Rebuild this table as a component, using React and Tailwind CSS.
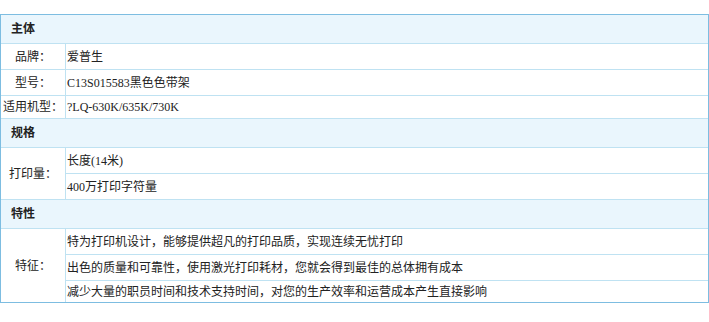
const sections = [
  {
    title: "主体",
    groups: [
      { label: "品牌：", rows: ["爱普生"] },
      { label: "型号：", rows: ["C13S015583黑色色带架"] },
      { label: "适用机型：", rows: ["?LQ-630K/635K/730K"], lastH: "h-[22px]" },
    ],
  },
  {
    title: "规格",
    groups: [{ label: "打印量：", rows: ["长度(14米)", "400万打印字符量"] }],
  },
  {
    title: "特性",
    groups: [
      {
        label: "特征：",
        rows: [
          "特为打印机设计，能够提供超凡的打印品质，实现连续无忧打印",
          "出色的质量和可靠性，使用激光打印耗材，您就会得到最佳的总体拥有成本",
          "减少大量的职员时间和技术支持时间，对您的生产效率和运营成本产生直接影响",
        ],
        lastH: "h-[21px]",
      },
    ],
  },
];

function Group({ group, noBorder }) {
  return (
    <div className={noBorder ? "flex" : "flex border-b border-[#bfe2f2]"}>
      <div className="w-[65px] shrink-0 border-r border-[#bfe2f2] flex items-center justify-center whitespace-nowrap">
        {group.label}
      </div>
      <div className="flex-1 min-w-0 flex flex-col">
        {group.rows.map((r, i) => {
          const lastRow = i === group.rows.length - 1;
          let cls = "h-[26px] border-b border-[#bfe2f2]";
          if (lastRow) cls = group.lastH ? group.lastH : "h-[25px]";
          return (
            <div
              key={i}
              className={cls + " flex items-center pl-px whitespace-nowrap overflow-hidden"}
            >
              {r}
            </div>
          );
        })}
      </div>
    </div>
  );
}

export default function App() {
  return (
    <div
      className="w-[709px] h-[322px] bg-white pt-[14px] text-[12px] text-[#222]"
      style={{ fontFamily: '"Liberation Serif", "Noto Sans CJK SC", serif' }}
    >
      <div className="w-[709px] border border-[#7dbde1]">
        {sections.map((s, si) => (
          <div key={si}>
            <div className="h-[29px] flex items-center pl-[10px] font-bold bg-[#eaf6fd] border-b border-[#bfe2f2]">
              {s.title}
            </div>
            {s.groups.map((g, gi) => (
              <Group
                key={gi}
                group={g}
                noBorder={si === sections.length - 1 && gi === s.groups.length - 1}
              />
            ))}
          </div>
        ))}
      </div>
    </div>
  );
}
